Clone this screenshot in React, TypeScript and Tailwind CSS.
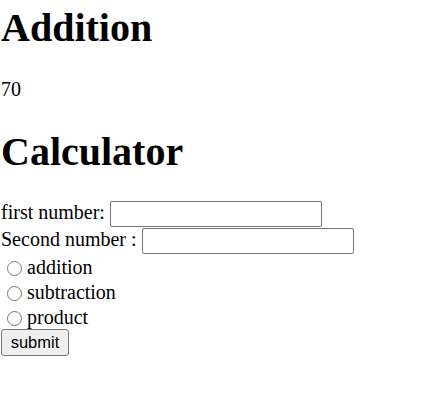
export default function App() {
  return (
    <div className="pl-[1px] pt-[5px] font-['Liberation_Serif','Times_New_Roman',serif] text-black bg-white min-h-[411px]">
      <h1 className="text-[40px] font-bold leading-[46px]">Addition</h1>
      <p className="mt-[27px] text-[20px] leading-[23px]">70</p>
      <h1 className="mt-[27.5px] text-[40px] font-bold leading-[46px]">Calculator</h1>

      <form className="mt-[26.5px] text-[20px]" onSubmit={(e) => e.preventDefault()}>
        <div className="flex items-start h-[27px]">
          <label htmlFor="first" className="leading-[23px]">first number:</label>
          <input id="first" type="text" className="ml-[5px] w-[212px] h-[26px] border border-[#767676] rounded-[2px] bg-white" />
        </div>
        <div className="flex items-start h-[26px]">
          <label htmlFor="second" className="leading-[23px] -mt-[0.5px]">Second number :</label>
          <input id="second" type="text" className="ml-[5px] w-[212px] h-[26px] border border-[#767676] rounded-[2px] bg-white" />
        </div>

        {["addition", "subtraction", "product"].map((op) => (
          <label key={op} className="flex items-start h-[25px] pt-[1px] leading-[25px]">
            <input type="radio" name="op" value={op} className="ml-[6px] mr-[5px] mt-[6px] w-[15px] h-[15px]" />
            <span>{op}</span>
          </label>
        ))}

        <button
          type="submit"
          className="block w-[68px] h-[27px] border border-[#767676] rounded-[3px] bg-[#efefef] font-['Liberation_Sans',Arial,sans-serif] text-[16.5px] leading-[19px]"
        >
          submit
        </button>
      </form>
    </div>
  );
}
